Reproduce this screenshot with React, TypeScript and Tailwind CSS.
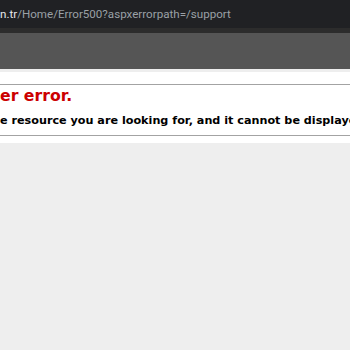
export default function App() {
  return (
    <div className="w-[350px] h-[350px] overflow-hidden bg-[#eeeeee]">
      <div className="h-[28px] bg-[#202124] flex items-center whitespace-nowrap overflow-hidden">
        <span className="text-[11.6px] leading-none text-[#e8eaed] font-['Roboto',sans-serif] pt-[2px]">
          n.tr
          <span className="text-[#9aa0a6]">/Home/Error500?aspxerrorpath=/support</span>
        </span>
      </div>
      <div className="h-[5px] bg-[#2c2c2c]" />
      <div className="h-[36px] bg-[#555555]" />
      <div className="mt-[3px] bg-white pt-[12px] pb-[7px]">
        <div className="border-y border-[#a3a3a3] pt-[2px] pb-[8px] whitespace-nowrap overflow-hidden font-['DejaVu_Sans',Verdana,sans-serif]">
          <h2 className="text-[15.7px] leading-[18px] font-bold text-[#cc0000]">er error.</h2>
          <h3 className="mt-[9px] text-[11.2px] leading-[13px] font-bold text-black">
            e resource you are looking for, and it cannot be displayed.
          </h3>
        </div>
      </div>
    </div>
  );
}
